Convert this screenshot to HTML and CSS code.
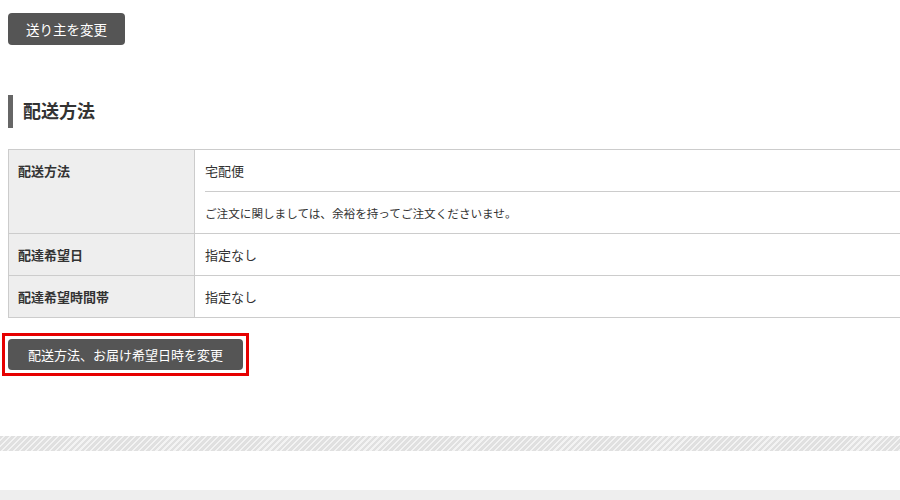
FILE: index.html
```html
<!DOCTYPE html>
<html lang="ja">
<head>
<meta charset="utf-8">
<link rel="stylesheet" href="styles.css">
</head>
<body>
<div class="page">
  <div class="content">
    <button class="btn btn-sender">送り主を変更</button>

    <h2 class="sec-title">配送方法</h2>

    <table class="info">
      <tr>
        <th>配送方法</th>
        <td class="multi">
          <div class="sub">宅配便</div>
          <div class="sub note">ご注文に関しましては、余裕を持ってご注文くださいませ。</div>
        </td>
      </tr>
      <tr>
        <th>配達希望日</th>
        <td>指定なし</td>
      </tr>
      <tr>
        <th>配達希望時間帯</th>
        <td>指定なし</td>
      </tr>
    </table>

    <div class="highlight">
      <button class="btn btn-ship">配送方法、お届け希望日時を変更</button>
    </div>
  </div>

  <div class="stripe"></div>
  <div class="footer-band"></div>
</div>
</body>
</html>
```
FILE: styles.css
```css
html, body {
  margin: 0;
  padding: 0;
  background: #fff;
  overflow: hidden;
}
body {
  font-family: "Noto Sans CJK JP", "Noto Sans", sans-serif;
  color: #333;
  width: 900px;
  height: 500px;
}
.page {
  display: flex;
  flex-direction: column;
}
.content {
  padding: 13px 0 0 8px;
  display: flex;
  flex-direction: column;
  align-items: flex-start;
}
.btn {
  font-family: inherit;
  font-size: 13.5px;
  color: #fff;
  background: #555;
  border: none;
  border-radius: 4px;
  height: 32px;
  line-height: 32px;
  padding: 0 18px;
  margin: 0;
  cursor: pointer;
  display: block;
}
.btn-ship {
  font-size: 13px;
  padding: 0 20px;
  height: 31px;
  line-height: 31px;
}
.sec-title {
  margin: 50px 0 0 0;
  border-left: 5px solid #666;
  padding-left: 10px;
  height: 33px;
  line-height: 31px;
  font-size: 18px;
  font-weight: bold;
  color: #333;
}
.info {
  margin-top: 21px;
  width: 892px;
  border-collapse: collapse;
  font-size: 13px;
}
.info th, .info td {
  border-top: 1px solid #ccc;
  border-bottom: 1px solid #ccc;
  text-align: left;
  vertical-align: top;
  line-height: 20px;
}
.info th {
  width: 166px;
  background: #eee;
  border-left: 1px solid #ccc;
  border-right: 1px solid #ccc;
  font-weight: bold;
  padding: 11px 10px 10px 9px;
}
.info td {
  padding: 11px 10px 10px 10px;
}
.info td.multi {
  padding: 0 0 0 10px;
}
.sub {
  padding: 11px 0 10px 0;
}
.sub + .sub {
  border-top: 1px solid #ccc;
}
.note {
  font-size: 11.6px;
}
.highlight {
  margin: 15px 0 0 -6px;
  border: 3px solid #e60000;
  padding: 3px;
}
.stripe {
  margin-top: 60px;
  height: 15px;
  background: repeating-linear-gradient(135deg, #e0e0e0 0px, #e0e0e0 2.6px, #f3f3f3 2.6px, #f3f3f3 4.2px);
}
.footer-band {
  margin-top: 39px;
  height: 20px;
  background: #eee;
}
```
